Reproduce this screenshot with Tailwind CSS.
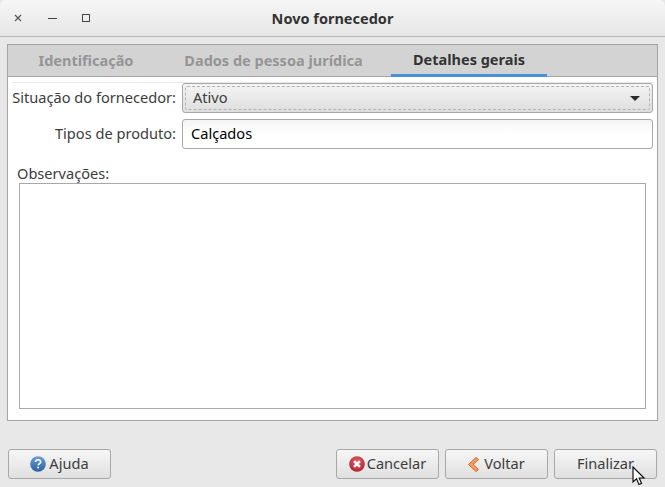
<!DOCTYPE html>
<html><head><meta charset="utf-8"><script src="https://cdn.jsdelivr.net/npm/@tailwindcss/browser@4"></script></head>
<body class="m-0 bg-[#e8e8e8]">
<div class="relative w-[665px] h-[487px] overflow-hidden bg-[#e8e8e8] font-['Noto_Sans',sans-serif] text-[14.6px] text-[#3c3c3c]">
  <div class="h-[37px] flex items-center relative bg-gradient-to-b from-[#f6f6f6] to-[#e6e6e6] border-b border-[#b4b4b4] rounded-t-[6px]">
    <svg class="absolute left-[14px] top-[14px]" width="8" height="8" viewBox="0 0 8 8"><path d="M1 1L7 7M7 1L1 7" stroke="#555" stroke-width="1.2"/></svg>
    <div class="absolute left-[48px] top-[18px] w-[9px] h-[1px] bg-[#444]"></div>
    <div class="absolute left-[82px] top-[14px] w-[8px] h-[8px] border border-[#444]"></div>
    <div class="w-full text-center font-bold text-[#333] text-[14.5px] leading-[37px]">Novo fornecedor</div>
  </div>
  <div class="mx-[7px] mt-[7px] w-[651px] h-[377px] border border-[#a4a4a4] bg-white flex flex-col">
    <div class="h-[32px] bg-[#d3d3d3] border-b border-[#a4a4a4] flex font-bold text-[14.5px] text-[#959595] shrink-0">
      <div class="w-[156px] text-center leading-[31px]">Identificação</div>
      <div class="w-[203px] ml-[8px] text-center leading-[31px]">Dados de pessoa jurídica</div>
      <div class="w-[156px] ml-[16px] text-center leading-[29px] h-[32px] text-[#333] border-b-[3px] border-[#4a90d9]">Detalhes gerais</div>
    </div>
    <div class="flex-1 flex flex-col relative">
      <div class="h-[1px] bg-[#e8e8e8] mx-[4px] mt-[5px]"></div>
      <div class="flex items-center h-[30px]">
        <div class="w-[168px] text-right whitespace-nowrap">Situação do fornecedor:</div>
        <div class="ml-[6px] w-[471px] h-[30px] rounded-[3px] border border-[#a8a8a8] bg-gradient-to-b from-[#f4f4f4] to-[#dedede] p-[2px]">
          <div class="h-full border border-dashed border-[#b4b4b4] rounded-[2px] flex items-center justify-between pl-[7px] pr-[9px]">
            <span>Ativo</span>
            <svg width="10" height="5" viewBox="0 0 10 5"><path d="M0 0H10L5 5Z" fill="#2c2c2c"/></svg>
          </div>
        </div>
      </div>
      <div class="flex items-center h-[30px] mt-[6px]">
        <div class="w-[168px] text-right whitespace-nowrap">Tipos de produto:</div>
        <div class="ml-[6px] w-[471px] h-[30px] rounded-[3px] border border-[#a8a8a8] bg-gradient-to-b from-[#f4f4f4] via-white to-white flex items-center pl-[8px] text-black">Calçados</div>
      </div>
      <div class="ml-[9px] mt-[14px] leading-[20px]">Observações:</div>
      <div class="ml-[11px] w-[627px] h-[226px] border border-[#a8a8a8] bg-white"></div>
    </div>
  </div>
  <div class="flex mx-[8px] mt-[28px] h-[30px]">
    <div class="w-[103px] h-[30px] rounded-[3px] border border-[#a8a8a8] bg-gradient-to-b from-[#f6f6f6] to-[#e0e0e0] flex items-center justify-center gap-[3px]">
      <svg width="16" height="16" viewBox="0 0 17 17"><defs><linearGradient id="b" x1="0" y1="0" x2="0" y2="1"><stop offset="0" stop-color="#6f9fd0"/><stop offset="1" stop-color="#2c5f9e"/></linearGradient></defs><circle cx="8.5" cy="8.5" r="8.3" fill="url(#b)"/><path d="M5.8 6.4C6 4.8 7.2 4 8.6 4C10.2 4 11.3 5 11.3 6.3C11.3 8 9 8.2 8.7 10" fill="none" stroke="#fff" stroke-width="1.6"/><rect x="7.8" y="11.3" width="1.8" height="1.9" fill="#fff"/></svg>
      <span>Ajuda</span>
    </div>
    <div class="w-[103px] h-[30px] ml-[225px] rounded-[3px] border border-[#a8a8a8] bg-gradient-to-b from-[#f6f6f6] to-[#e0e0e0] flex items-center justify-center gap-[2px]">
      <svg width="16" height="16" viewBox="0 0 17 17"><defs><radialGradient id="r" cx="0.5" cy="0.35" r="0.7"><stop offset="0" stop-color="#e8626a"/><stop offset="1" stop-color="#a81f2a"/></radialGradient></defs><circle cx="8.5" cy="8.5" r="8.3" fill="url(#r)"/><path d="M5.4 5.4L11.6 11.6M11.6 5.4L5.4 11.6" stroke="#fff" stroke-width="2.6"/></svg>
      <span>Cancelar</span>
    </div>
    <div class="w-[103px] h-[30px] ml-[6px] rounded-[3px] border border-[#a8a8a8] bg-gradient-to-b from-[#f6f6f6] to-[#e0e0e0] flex items-center justify-center gap-[5px]">
      <svg width="11" height="15" viewBox="0 0 11 15"><path d="M8 0.5L10.5 2.5L5 7.5L10.5 12.5L8 14.5L0.5 7.5Z" fill="#f2a265" stroke="#e0601c" stroke-width="1"/></svg>
      <span>Voltar</span>
    </div>
    <div class="w-[103px] h-[30px] ml-[6px] rounded-[3px] border border-[#a8a8a8] bg-gradient-to-b from-[#f6f6f6] to-[#e0e0e0] flex items-center justify-center">
      <span>Finalizar</span>
    </div>
  </div>
  <svg class="absolute left-[632px] top-[466px]" width="14" height="21" viewBox="0 0 14 21"><path d="M1 1V16L4.5 12.8L7 18.5L9.6 17.4L7.2 12H12Z" fill="#fff" stroke="#111" stroke-width="1.2"/></svg>
</div>
</body></html>
